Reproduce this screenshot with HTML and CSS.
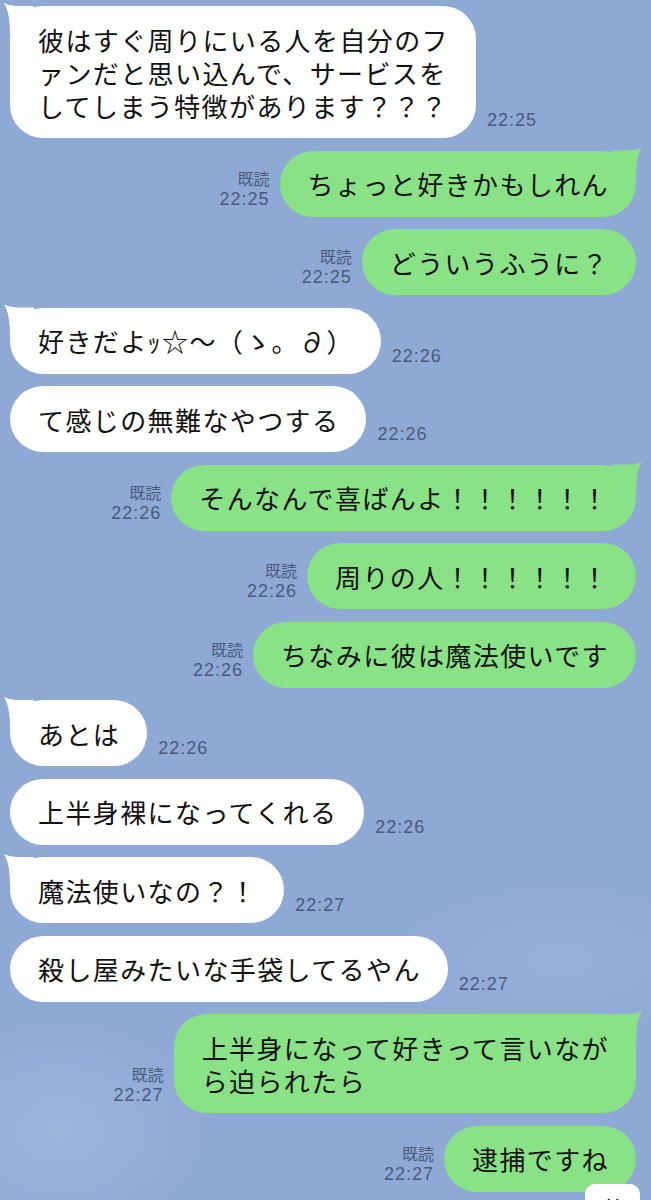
FILE: index.html
```html
<!DOCTYPE html>
<html lang="ja">
<head>
<meta charset="utf-8">
<title>LINE</title>
<link rel="stylesheet" href="styles.css">
</head>
<body>
<div class="chat">
  <div class="row in">
    <div class="bubble tail">彼はすぐ周りにいる人を自分のフ<br>ァンだと思い込んで、サービスを<br>してしまう特徴があります？？？</div>
    <div class="meta"><span class="time">22:25</span></div>
  </div>
  <div class="row out">
    <div class="meta"><span class="read">既読</span><span class="time">22:25</span></div>
    <div class="bubble tail">ちょっと好きかもしれん</div>
  </div>
  <div class="row out">
    <div class="meta"><span class="read">既読</span><span class="time">22:25</span></div>
    <div class="bubble">どういうふうに？</div>
  </div>
  <div class="row in">
    <div class="bubble tail">好きだよｯ☆〜（ゝ。∂）</div>
    <div class="meta"><span class="time">22:26</span></div>
  </div>
  <div class="row in">
    <div class="bubble">て感じの無難なやつする</div>
    <div class="meta"><span class="time">22:26</span></div>
  </div>
  <div class="row out">
    <div class="meta"><span class="read">既読</span><span class="time">22:26</span></div>
    <div class="bubble tail">そんなんで喜ばんよ！！！！！！</div>
  </div>
  <div class="row out">
    <div class="meta"><span class="read">既読</span><span class="time">22:26</span></div>
    <div class="bubble">周りの人！！！！！！</div>
  </div>
  <div class="row out">
    <div class="meta"><span class="read">既読</span><span class="time">22:26</span></div>
    <div class="bubble">ちなみに彼は魔法使いです</div>
  </div>
  <div class="row in">
    <div class="bubble tail">あとは</div>
    <div class="meta"><span class="time">22:26</span></div>
  </div>
  <div class="row in">
    <div class="bubble">上半身裸になってくれる</div>
    <div class="meta"><span class="time">22:26</span></div>
  </div>
  <div class="row in">
    <div class="bubble tail">魔法使いなの？！</div>
    <div class="meta"><span class="time">22:27</span></div>
  </div>
  <div class="row in">
    <div class="bubble">殺し屋みたいな手袋してるやん</div>
    <div class="meta"><span class="time">22:27</span></div>
  </div>
  <div class="row out">
    <div class="meta"><span class="read">既読</span><span class="time">22:27</span></div>
    <div class="bubble tail">上半身になって好きって言いなが<br>ら迫られたら</div>
  </div>
  <div class="row out">
    <div class="meta"><span class="read">既読</span><span class="time">22:27</span></div>
    <div class="bubble">逮捕ですね</div>
  </div>
</div>
<div class="scroll-btn"><span class="chev"></span></div>
</body>
</html>
```
FILE: styles.css
```css
html, body {
  margin: 0;
  padding: 0;
}
body {
  width: 651px;
  height: 1200px;
  overflow: hidden;
  position: relative;
  background-color: #8fa9d5;
  background-image:
    radial-gradient(ellipse 160px 120px at 60px 1130px, rgba(170,192,228,0.5), rgba(170,192,228,0)),
    radial-gradient(ellipse 200px 90px at 560px 960px, rgba(165,188,226,0.35), rgba(165,188,226,0));
  font-family: "Noto Sans CJK JP", "Noto Sans", sans-serif;
}
.chat {
  display: flex;
  flex-direction: column;
  gap: 12.5px;
  padding-top: 6px;
}
.row {
  display: flex;
  align-items: flex-end;
}
.row.in {
  padding-left: 10px;
}
.row.out {
  justify-content: flex-end;
  padding-right: 15px;
}
.bubble {
  position: relative;
  white-space: nowrap;
  font-size: 26px;
  letter-spacing: 1.4px;
  line-height: 33px;
  color: #111;
  padding: 16.5px 27px 16.5px 28px;
  border-radius: 33px;
}
.in .bubble {
  background: #ffffff;
}
.out .bubble {
  background: #8ae287;
}
.bubble.tail::before {
  content: "";
  position: absolute;
  top: -3px;
  width: 30px;
  height: 32px;
  background: inherit;
}
.in .bubble.tail::before {
  left: -6px;
  clip-path: path('M0 0 C 5 2.5 10 3 18 3 L 30 3 L 30 32 L 6 32 C 6 18 4.5 7 0 0 Z');
}
.out .bubble.tail::before {
  right: -6px;
  clip-path: path('M30 0 C 25 2.5 20 3 12 3 L 0 3 L 0 32 L 24 32 C 24 18 25.5 7 30 0 Z');
}
.meta {
  display: flex;
  flex-direction: column;
  margin-bottom: 7px;
  color: #4a5a7c;
  line-height: 21px;
}
.in .meta {
  margin-left: 11px;
  align-items: flex-start;
}
.out .meta {
  margin-right: 10px;
  align-items: flex-end;
}
.read {
  font-family: "Noto Sans CJK JP", sans-serif;
  font-size: 16px;
}
.time {
  font-family: "Liberation Sans", Arial, sans-serif;
  font-size: 18px;
  letter-spacing: 1px;
}
.scroll-btn {
  position: absolute;
  left: 585px;
  top: 1184px;
  width: 55px;
  height: 44px;
  background: #ffffff;
  border-radius: 10px;
}
.chev {
  position: absolute;
  left: 24px;
  top: 12px;
  width: 6px;
  height: 6px;
  border-left: 2px solid #222;
  border-top: 2px solid #222;
  transform: rotate(225deg);
}
```
